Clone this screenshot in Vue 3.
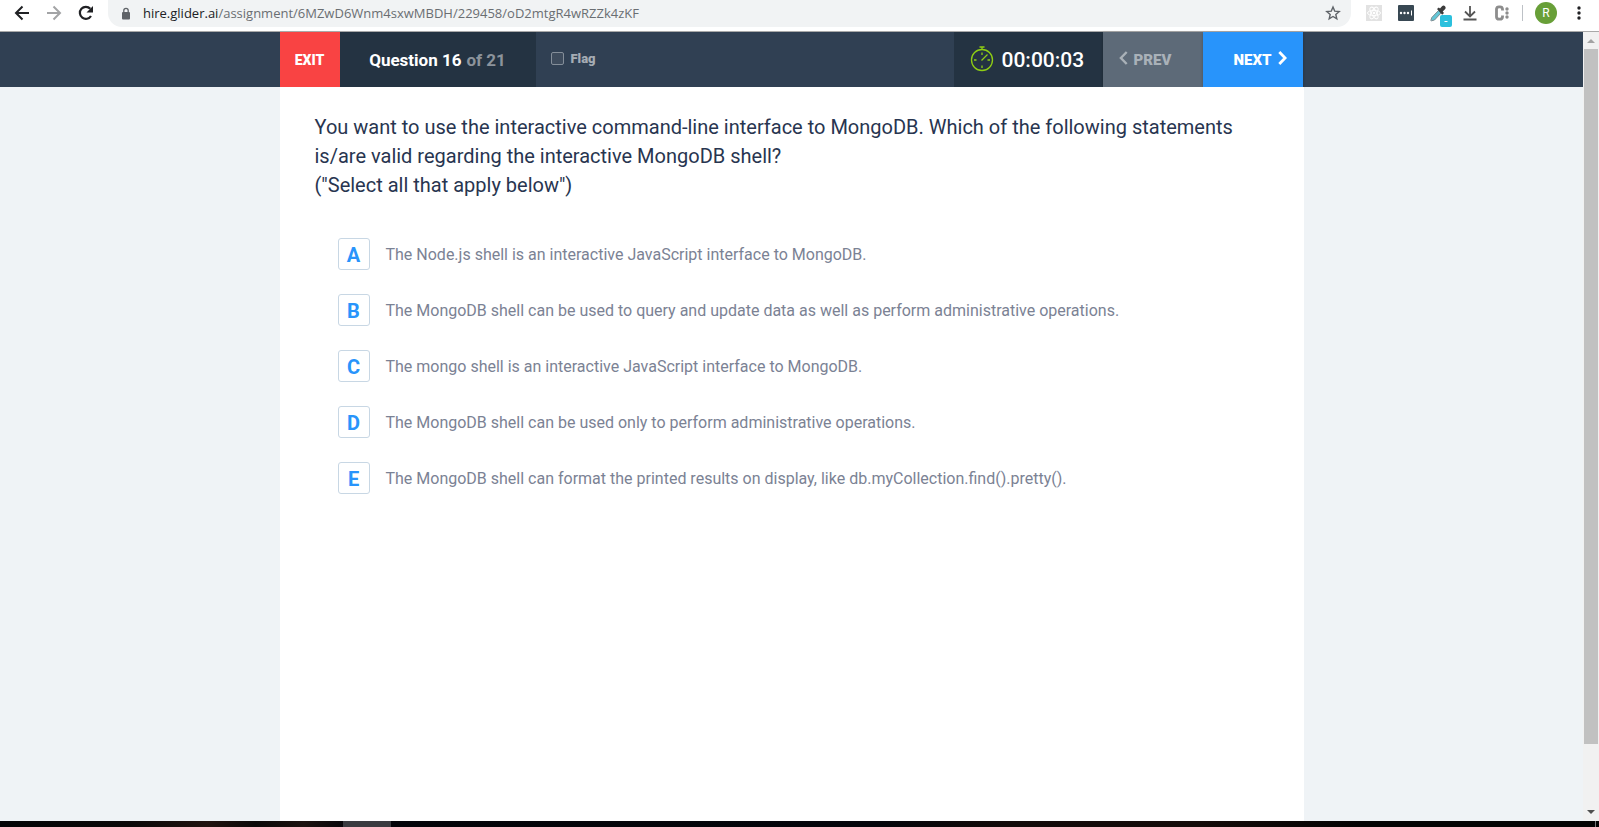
<script setup>
import { ref } from 'vue'

const flagged = ref(false)
const picked = ref([])
const options = [
  { key: 'A', text: 'The Node.js shell is an interactive JavaScript interface to MongoDB.' },
  { key: 'B', text: 'The MongoDB shell can be used to query and update data as well as perform administrative operations.' },
  { key: 'C', text: 'The mongo shell is an interactive JavaScript interface to MongoDB.' },
  { key: 'D', text: 'The MongoDB shell can be used only to perform administrative operations.' },
  { key: 'E', text: 'The MongoDB shell can format the printed results on display, like db.myCollection.find().pretty().' },
]
const toggle = (key) => {
  picked.value = picked.value.includes(key) ? picked.value.filter((k) => k !== key) : [...picked.value, key]
}
</script>

<template>
  <div class="window">
    <header class="browser">
      <nav class="nav">
        <button class="icon-btn" aria-label="Back">
          <svg width="16" height="16" viewBox="0 0 16 16" fill="none" stroke="#202124" stroke-width="2"><path d="M15 8H2M8.500 1.500L2 8l6.500 6.500" /></svg>
        </button>
        <button class="icon-btn" aria-label="Forward">
          <svg width="16" height="16" viewBox="0 0 16 16" fill="none" stroke="#a3a4a6" stroke-width="2"><path d="M1 8h13M7.500 1.500L14 8l-6.500 6.500" /></svg>
        </button>
        <button class="icon-btn" aria-label="Reload">
          <svg width="16" height="16" viewBox="0 0 16 16"><path d="M13 11A6 6 0 1 1 12.300 3.800" fill="none" stroke="#202124" stroke-width="2.200" /><path d="M15 1v6.500H8.500z" fill="#202124" /></svg>
        </button>
      </nav>
      <div class="address">
        <svg width="10" height="13" viewBox="0 0 10 13"><rect x="1" y="5" width="8" height="7.500" rx="1" fill="#5f6368" /><path d="M2.800 5.500V3.500a2.200 2.200 0 0 1 4.400 0v2" fill="none" stroke="#5f6368" stroke-width="1.300" /></svg>
        <span class="url"><span class="host">hire.glider.ai</span>/assignment/6MZwD6Wnm4sxwMBDH/229458/oD2mtgR4wRZZk4zKF</span>
        <button class="icon-btn" aria-label="Bookmark">
          <svg width="16" height="16" viewBox="0 0 16 16" fill="none" stroke="#5f6368" stroke-width="1.400"><path d="M8 2l1.700 4.100 4.500.4-3.400 2.900 1 4.400L8 11.500l-3.800 2.300 1-4.400-3.400-2.900 4.500-.4z" /></svg>
        </button>
      </div>
      <div class="extensions">
        <button class="icon-btn" aria-label="React tools">
          <svg width="16" height="16" viewBox="0 0 16 16"><rect width="16" height="16" fill="#e2e2e2" /><g fill="none" stroke="#fff"><ellipse cx="8" cy="8" rx="6.500" ry="2.600" /><ellipse cx="8" cy="8" rx="6.500" ry="2.600" transform="rotate(60 8 8)" /><ellipse cx="8" cy="8" rx="6.500" ry="2.600" transform="rotate(120 8 8)" /></g><circle cx="8" cy="8" r="1.300" fill="#fff" /></svg>
        </button>
        <button class="icon-btn" aria-label="Passwords">
          <svg width="16" height="16" viewBox="0 0 16 16"><rect width="16" height="16" rx="1" fill="#384853" /><g fill="#fff"><circle cx="3" cy="8" r="1.200" /><circle cx="6.500" cy="8" r="1.200" /><circle cx="10" cy="8" r="1.200" /><rect x="13" y="5.500" width="1" height="5" /></g></svg>
        </button>
        <button class="icon-btn picker" aria-label="Color picker">
          <svg width="22" height="22" viewBox="0 0 22 22"><path d="M.8 15.500l1-3L8.500 5.500 11 8l-6.500 7-3 .8z" fill="#63c6d6" stroke="#7c8b90" stroke-width="1" /><path d="M7 4l1.800-1.500 1.200 1L12 1.200c2-2.200 5 1 3 3L12.700 6.500 14 8l-1.800 1.800z" fill="#3b3b3b" /><rect x="10" y="10" width="12" height="12" rx="2" fill="#2bc0dd" /><path d="M14.500 16.500h3" stroke="#fff" /></svg>
        </button>
        <button class="icon-btn" aria-label="Downloads">
          <svg width="16" height="16" viewBox="0 0 16 16" fill="none" stroke="#555" stroke-width="1.800"><path d="M8 1v10M3 6.500l5 5 5-5M1.500 14.500h13" /></svg>
        </button>
        <button class="icon-btn" aria-label="Clipboard tools">
          <svg width="16" height="16" viewBox="0 0 16 16"><path d="M8.500 5.500V4A2.500 2.500 0 0 0 6 1.800H5A2.500 2.500 0 0 0 2.500 4v8A2.500 2.500 0 0 0 5 14.200h1A2.500 2.500 0 0 0 8.500 12v-1.500" fill="none" stroke="#8d8d8d" stroke-width="2.800" /><g fill="#8d8d8d"><circle cx="13" cy="4" r="1.700" /><circle cx="13" cy="8" r="1.700" /><circle cx="13" cy="12" r="1.700" /></g></svg>
        </button>
        <span class="divider"></span>
        <button class="avatar" aria-label="Profile">R</button>
        <button class="icon-btn" aria-label="Menu">
          <svg width="4" height="16" viewBox="0 0 4 16" fill="#202124"><circle cx="2" cy="3" r="1.700" /><circle cx="2" cy="8" r="1.700" /><circle cx="2" cy="13" r="1.700" /></svg>
        </button>
      </div>
    </header>

    <div class="viewport">
      <div class="page">
        <div class="topbar">
          <div class="bar">
            <button class="exit">EXIT</button>
            <div class="counter">Question 16 <span class="total">of 21</span></div>
            <label class="flag"><input v-model="flagged" type="checkbox" />Flag</label>
            <div class="timer">
              <svg width="24" height="26" viewBox="0 0 24 26" fill="none" stroke="#8fce14" stroke-width="1.300"><circle cx="12" cy="14" r="10.500" /><path d="M9.500 1h5M12 1v2.500M12 6.500V9M12 19.500V22M4 14h2.500M17.500 14H20M11.500 14.500l6-6" /></svg>
              <span>00:00:03</span>
            </div>
            <button class="step prev">
              <svg width="9" height="14" viewBox="0 0 9 14" fill="none" stroke="currentColor" stroke-width="2.400"><path d="M7.700 1L1.900 7l5.800 6" /></svg>PREV
            </button>
            <button class="step next">
              NEXT<svg width="9" height="14" viewBox="0 0 9 14" fill="none" stroke="currentColor" stroke-width="2.800"><path d="M1.300 1l5.800 6-5.800 6" /></svg>
            </button>
          </div>
        </div>
        <main class="sheet">
          <p class="question">
            You want to use the interactive command-line interface to MongoDB. Which of the following statements is/are valid regarding the interactive MongoDB shell?<br />("Select all that apply below")
          </p>
          <ul class="options">
            <li v-for="o in options" :key="o.key">
              <button class="option" :aria-pressed="picked.includes(o.key)" @click="toggle(o.key)">
                <span class="letter">{{ o.key }}</span><span class="answer">{{ o.text }}</span>
              </button>
            </li>
          </ul>
        </main>
      </div>
      <div class="scrollbar" aria-hidden="true">
        <svg width="8" height="4" viewBox="0 0 8 4"><path d="M0 4L4 0l4 4z" fill="#a3a3a3" /></svg>
        <div class="track"><div class="thumb"></div></div>
        <svg width="8" height="4" viewBox="0 0 8 4"><path d="M0 0l4 4 4-4z" fill="#505050" /></svg>
      </div>
    </div>
    <div class="taskbar"><span class="task"></span><span class="peek"></span></div>
  </div>
</template>

<style>
body {
  margin: 0;
}
</style>

<style scoped>
* {
  box-sizing: border-box;
}
button {
  border: 0;
  padding: 0;
  background: none;
  font: inherit;
  color: inherit;
  cursor: pointer;
}
svg {
  display: block;
  flex: none;
}
.window {
  display: flex;
  flex-direction: column;
  min-height: 100vh;
  font-family: Roboto, sans-serif;
  background: #fff;
}
.browser {
  display: flex;
  align-items: flex-start;
  height: 32px;
  border-bottom: 1px solid #a9a9a9;
  padding-right: 18px;
}
.nav {
  display: flex;
  align-items: center;
  gap: 16px;
  height: 26px;
  padding: 0 14px;
}
.icon-btn {
  display: grid;
  place-items: center;
}
.address {
  flex: 1;
  display: flex;
  align-items: center;
  gap: 12px;
  height: 27px;
  padding: 0 10px 1px 13px;
  border-radius: 0 0 14px 14px;
  background: #f1f3f4;
}
.url {
  flex: 1;
  font: 13px/20px "Open Sans", "Noto Sans", sans-serif;
  color: #6a6e72;
}
.host {
  color: #202124;
}
.extensions {
  display: flex;
  align-items: center;
  gap: 16px;
  height: 26px;
  padding-left: 15px;
}
.picker {
  width: 16px;
  height: 16px;
  place-items: start;
}
.divider {
  width: 1px;
  height: 16px;
  margin-left: -4px;
  background: #bdc1c6;
}
.avatar {
  width: 22px;
  height: 22px;
  margin: 0 4px 0 -4px;
  border-radius: 50%;
  background: #689f38;
  color: #fff;
  font-size: 12px;
}
.viewport {
  flex: 1;
  display: flex;
}
.page {
  flex: 1;
  display: flex;
  flex-direction: column;
  background: #eff3f6;
}
.topbar {
  background: #304053;
}
.bar {
  display: flex;
  width: 100%;
  max-width: 1024px;
  height: 55px;
  margin: 0 auto;
  padding-right: 1px;
  color: #fff;
}
.exit {
  width: 60px;
  background: #f94343;
  font-size: 14px;
  font-weight: 900;
}
.counter {
  display: grid;
  grid-auto-flow: column;
  place-content: center;
  align-items: center;
  gap: 5px;
  width: 196px;
  background: #243342;
  font-size: 17px;
  font-weight: 700;
}
.total {
  color: #8c939b;
}
.flag {
  flex: 1;
  display: flex;
  align-items: center;
  gap: 7px;
  padding: 0 0 2px 15px;
  color: #a5acb4;
  font-size: 13px;
  font-weight: 900;
}
.flag input {
  appearance: none;
  width: 13px;
  height: 13px;
  margin: 0;
  border: 1px solid #848e99;
  border-radius: 2px;
  background: #3e4c5d;
}
.flag input:checked {
  background: #2894fb;
}
.timer {
  display: flex;
  align-items: center;
  gap: 8px;
  width: 149px;
  padding-left: 16px;
  background: #243342;
  font-size: 21px;
  font-weight: 500;
}
.timer svg {
  margin-bottom: 2px;
}
.step {
  display: flex;
  align-items: center;
  gap: 6px;
  width: 100px;
  padding: 0 16px;
  font-size: 15px;
  font-weight: 900;
  box-shadow: 0 1px 3px rgba(0, 0, 0, 0.25);
}
.step svg {
  margin-bottom: 3px;
}
.prev {
  background: #5d6a78;
  color: #a9b1b8;
}
.next {
  justify-content: flex-end;
  background: #2894fb;
}
.sheet {
  flex: 1;
  width: 100%;
  max-width: 1024px;
  margin: 0 auto;
  padding: 26px 35px;
  background: #fff;
}
.question {
  margin: 0;
  color: #283550;
  font-size: 20px;
  line-height: 29px;
}
.options {
  display: grid;
  gap: 24px;
  margin: 38px 0 0;
  padding: 0 23px;
  list-style: none;
}
.option {
  display: flex;
  align-items: center;
  gap: 16px;
  color: #7b8294;
  font-size: 16px;
  line-height: 24px;
  text-align: left;
}
.answer {
  padding-top: 2px;
}
.letter {
  display: grid;
  place-items: center;
  flex: none;
  width: 32px;
  height: 32px;
  padding-top: 2px;
  border: 1px solid #c8d7e4;
  border-radius: 3px;
  color: #2894fb;
  font-size: 20px;
  font-weight: 700;
}
.scrollbar {
  display: flex;
  flex-direction: column;
  align-items: center;
  gap: 6px;
  width: 16px;
  padding: 7px 1px;
  background: #f1f1f1;
}
.track {
  flex: 1;
  width: 100%;
}
.thumb {
  height: 92%;
  background: #c1c1c1;
}
.taskbar {
  display: flex;
  justify-content: space-between;
  height: 6px;
  padding: 0 3px 0 343px;
  background: linear-gradient(90deg, #030406, #0a0808 8%, #20120f 13%, #0a0808 16%, #1c1210 19%, #030409 22%, #04050a 55%, #120a09 63%, #140b09 75%, #030303 85%);
}
.task {
  width: 48px;
  background: #3a3b40;
}
.peek {
  width: 1px;
  background: #77787a;
}
</style>
